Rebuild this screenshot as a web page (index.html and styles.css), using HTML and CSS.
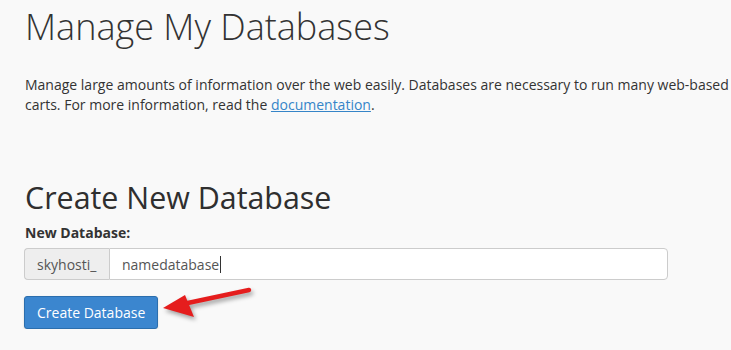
FILE: index.html
```html
<!DOCTYPE html>
<html lang="en">
<head>
    <meta charset="utf-8" />
    <title>Manage My Databases</title>
    <link rel="stylesheet" href="styles.css">
</head>
<body>
    <div class="page">
        <h1>Manage My Databases</h1>

        <p class="description">
            Manage large amounts of information over the web easily. Databases are necessary to run many web-based applications.<br>
            carts. For more information, read the <a href="#">documentation</a>.
        </p>

        <h2>Create New Database</h2>

        <form class="create-form" onsubmit="return false">
            <label class="field-label" for="db">New Database:</label>
            <div class="input-group">
                <span class="input-addon">skyhosti_</span>
                <input id="db" class="input-field" type="text" value="namedatabase" />
                <span class="caret"></span>
            </div>
            <div class="actions">
                <button class="btn-primary" type="submit">Create Database</button>
                <svg class="arrow" width="100" height="40" viewBox="0 0 100 40">
                    <path d="M90 4 L24 18" stroke="#e51d1d" stroke-width="4.5" stroke-linecap="round" />
                    <polygon points="4,22 26,9 35,31" fill="#e51d1d" />
                </svg>
            </div>
        </form>
    </div>
</body>
</html>
```

FILE: styles.css
```css
body {
    font-family: 'Open Sans', 'Noto Sans', sans-serif;
    margin: 0;
    padding: 0;
    background-color: #f9f9f9;
    color: #333;
    overflow: hidden;
}

.page {
    padding: 0 24px;
    width: 1100px;
}

h1 {
    font-size: 36px;
    font-weight: 300;
    line-height: 1;
    margin: 9px 0 0 1px;
    color: #333;
}

.description {
    font-size: 14px;
    line-height: 20px;
    margin: 30px 0 0 1px;
    white-space: nowrap;
    color: #333;
}

.description a {
    color: #3685c8;
    text-decoration: underline;
}

h2 {
    font-size: 30.4px;
    font-weight: 400;
    line-height: 1;
    margin: 68px 0 0 1px;
    color: #2f2f2f;
}

.create-form {
    display: flex;
    flex-direction: column;
    margin-top: 10px;
}

.field-label {
    font-size: 14px;
    font-weight: 700;
    line-height: 20px;
    margin-left: 1px;
}

.input-group {
    display: flex;
    width: 644px;
    height: 32px;
    margin-top: 5px;
    position: relative;
}

.input-addon {
    display: flex;
    align-items: center;
    box-sizing: border-box;
    width: 85px;
    padding-left: 12px;
    font-size: 14px;
    color: #555;
    background-color: #eee;
    border: 1px solid #ccc;
    border-right: none;
    border-radius: 4px 0 0 4px;
}

.input-field {
    flex: 1;
    box-sizing: border-box;
    height: 32px;
    padding: 0 12px;
    font-family: inherit;
    font-size: 14px;
    color: #555;
    background: #fff;
    border: 1px solid #ccc;
    border-radius: 0 4px 4px 0;
    outline: none;
}

.caret {
    position: absolute;
    left: 196px;
    top: 8px;
    width: 1px;
    height: 17px;
    background: #333;
}

.actions {
    display: flex;
    align-items: flex-start;
    margin-top: 16px;
}

.btn-primary {
    box-sizing: border-box;
    height: 33px;
    padding: 0 12px;
    font-family: inherit;
    font-size: 14px;
    color: #fff;
    background-color: #3b86cf;
    border: 1px solid #2b6ead;
    border-radius: 3px;
    box-shadow: 0 1px 2px rgba(0, 0, 0, 0.15);
    cursor: pointer;
}

.arrow {
    margin: -10px 0 0 1px;
    filter: drop-shadow(2px 3px 2px rgba(0, 0, 0, 0.35));
}
```
